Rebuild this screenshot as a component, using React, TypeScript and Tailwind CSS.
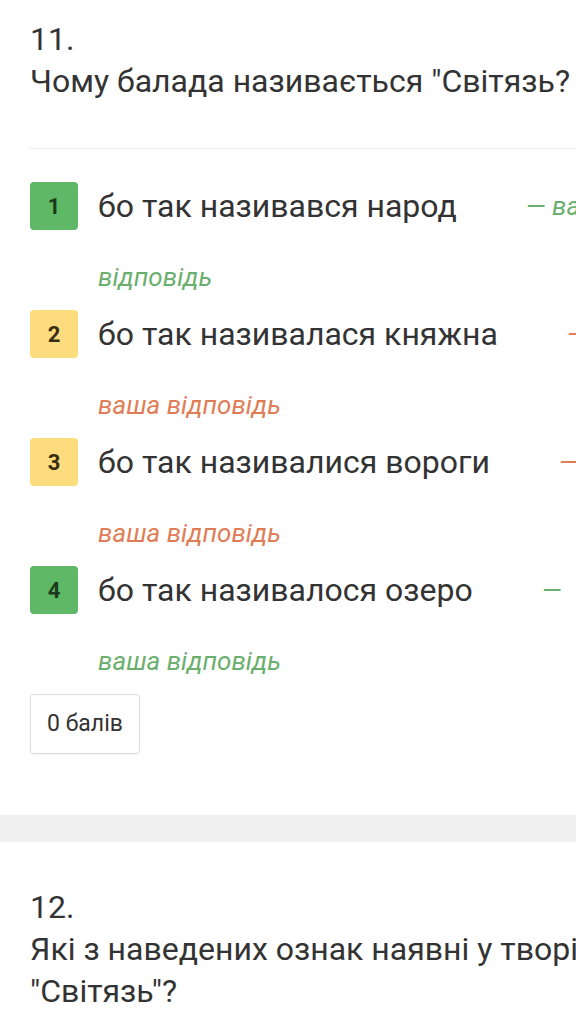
import React from 'react';

type Option = {
  n: number;
  text: string;
  badge: string;
  tone: string;
  head: string;
  tail: string;
};

const options: Option[] = [
  { n: 1, text: 'бо так називався народ', badge: 'bg-[#5fb865] text-[#1d3a1d]', tone: 'text-[#6aaf6d]', head: '— ваша', tail: 'відповідь' },
  { n: 2, text: 'бо так називалася княжна', badge: 'bg-[#fddc7e] text-[#3a2e10]', tone: 'text-[#e07d56]', head: '—', tail: 'ваша відповідь' },
  { n: 3, text: 'бо так називалися вороги', badge: 'bg-[#fddc7e] text-[#3a2e10]', tone: 'text-[#e07d56]', head: '—', tail: 'ваша відповідь' },
  { n: 4, text: 'бо так називалося озеро', badge: 'bg-[#5fb865] text-[#1d3a1d]', tone: 'text-[#6aaf6d]', head: '—', tail: 'ваша відповідь' },
];

const OptionRow: React.FC<{ o: Option }> = ({ o }) => (
  <div className="flex items-start gap-[20px]">
    <div className={`w-12 h-12 shrink-0 rounded-[4px] flex items-center justify-center text-[22px] font-bold ${o.badge}`}>
      {o.n}
    </div>
    <div className="flex flex-col">
      <div className="h-12 flex items-center whitespace-nowrap">
        <span className="text-[32px] leading-[48px] text-[#333]">{o.text}</span>
        <span className={`ml-[69px] text-[26px] italic ${o.tone}`}>{o.head}</span>
      </div>
      <div className={`mt-[32px] text-[26px] leading-[30px] italic ${o.tone}`}>{o.tail}</div>
    </div>
  </div>
);

export default function App() {
  return (
    <div className="w-full overflow-hidden bg-white font-[Roboto,sans-serif] text-[#333]">
      {/* question 11 */}
      <section className="w-[650px] px-[30px] pt-[18px]">
        <div className="text-[32px] leading-[42px]">11.</div>
        <div className="text-[32px] leading-[42px] whitespace-nowrap">Чому балада називається "Світязь?</div>

        <div className="mt-[46px] h-px bg-[#ececec]" />

        <div className="mt-[33px] flex flex-col gap-[18px]">
          {options.map((o) => (
            <OptionRow key={o.n} o={o} />
          ))}
        </div>

        <div className="mt-[18px] inline-block rounded-[4px] border border-[#dedede] px-[16px] py-[14px] text-[23px] leading-[30px] shadow-[0_1px_2px_rgba(0,0,0,0.06)]">
          0 балів
        </div>
      </section>

      <div className="mt-[61px] h-[27px] bg-[#f0f0f0]" />

      {/* question 12 */}
      <section className="w-[650px] px-[30px] pt-[44px] pb-[40px]">
        <div className="text-[32px] leading-[42px]">12.</div>
        <div className="text-[32px] leading-[42px]">Які з наведених ознак наявні у творі "Світязь"?</div>
      </section>
    </div>
  );
}
